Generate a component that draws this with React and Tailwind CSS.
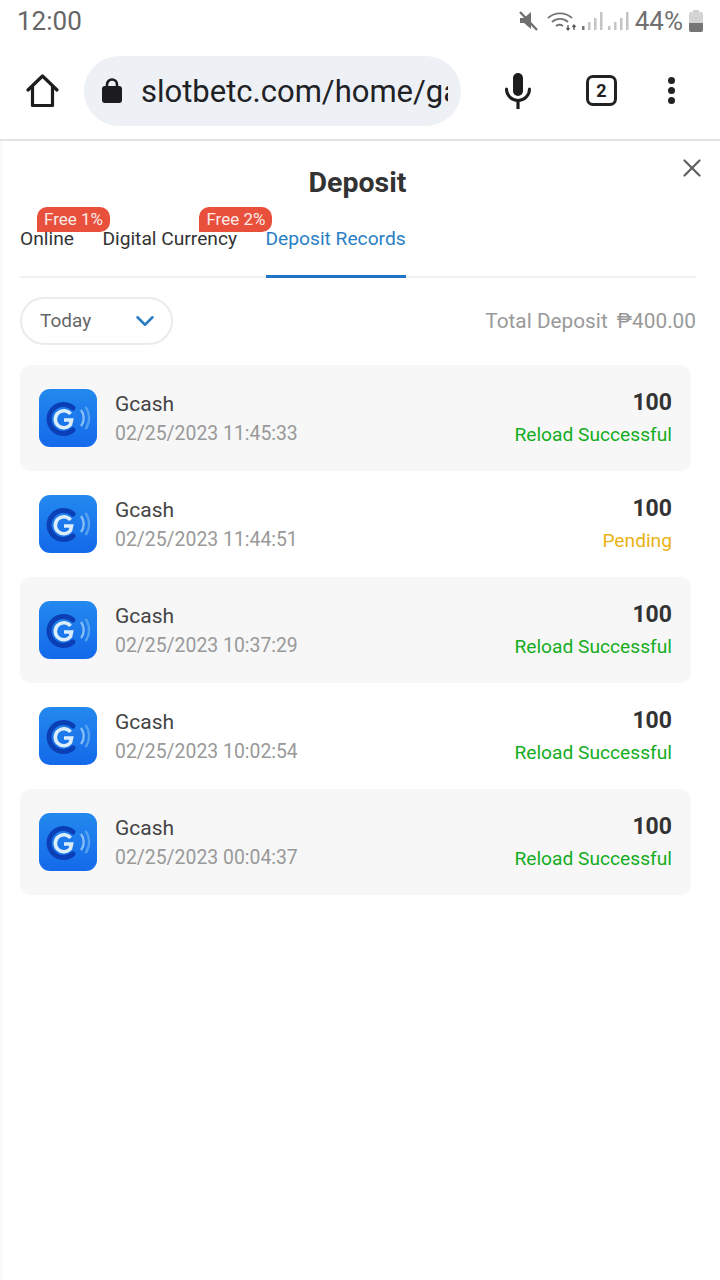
import React from 'react';
import { X, ChevronDown } from 'lucide-react';

const records = [
  { time: '02/25/2023 11:45:33', status: 'Reload Successful', shaded: true },
  { time: '02/25/2023 11:44:51', status: 'Pending', shaded: false },
  { time: '02/25/2023 10:37:29', status: 'Reload Successful', shaded: true },
  { time: '02/25/2023 10:02:54', status: 'Reload Successful', shaded: false },
  { time: '02/25/2023 00:04:37', status: 'Reload Successful', shaded: true },
];

const GcashIcon = () => (
  <svg width="58" height="58" viewBox="0 0 58 58" className="shrink-0">
    <defs>
      <linearGradient id="gcashBg" x1="0" y1="0" x2="0" y2="1">
        <stop offset="0" stopColor="#2389ee" />
        <stop offset="1" stopColor="#1469ea" />
      </linearGradient>
    </defs>
    <rect width="58" height="58" rx="11" fill="url(#gcashBg)" />
    <g transform="translate(-2 1.500)">
      <path d="M36 17.500 A14.500 14.500 0 1 0 36 39.500" fill="none" stroke="#0b3fb5" strokeWidth="5" strokeLinecap="round" />
      <path d="M33.500 23.500 A8.500 8.500 0 1 0 33.500 34 L34.500 29.500 H27" fill="none" stroke="#dcedfc" strokeWidth="3.600" />
    </g>
    <path d="M42 21 A13 13 0 0 1 42 37" fill="none" stroke="#86bdf4" strokeWidth="2.400" />
    <path d="M46.500 18 A19 19 0 0 1 46.500 40" fill="none" stroke="#55a0ef" strokeWidth="2.400" />
  </svg>
);

const StatusIcons = () => (
  <svg width="110" height="24" viewBox="0 0 110 24" className="shrink-0">
    {/* muted speaker */}
    <path d="M1 9h4l7-6v17l-7-6H1z" fill="#6f6f6f" />
    <path d="M1 3l17 18" stroke="#6f6f6f" strokeWidth="2.400" />
    {/* wifi */}
    <path d="M29 9a18 18 0 0 1 24 0M33 13a12 12 0 0 1 16 0M37 17a6 6 0 0 1 7 0" fill="none" stroke="#757575" strokeWidth="1.800" />
    <path d="M49 21v-5M47.500 19l1.500 2 1.500-2M55 16v5M53.500 18l1.500-2 1.500 2" fill="none" stroke="#555" strokeWidth="1.300" />
    {/* signal bars */}
    <rect x="63" y="17" width="2.500" height="4" fill="#777" />
    <rect x="69" y="13" width="2.500" height="8" fill="#c4c4c4" />
    <rect x="75" y="9" width="2.500" height="12" fill="#c4c4c4" />
    <rect x="81" y="3" width="2.500" height="18" fill="#c4c4c4" />
    <rect x="89" y="17" width="2.500" height="4" fill="#c4c4c4" />
    <rect x="95" y="13" width="2.500" height="8" fill="#c4c4c4" />
    <rect x="101" y="9" width="2.500" height="12" fill="#c4c4c4" />
    <rect x="107" y="3" width="2.500" height="18" fill="#c4c4c4" />
  </svg>
);

const Battery = () => (
  <div className="flex flex-col items-center w-[14px]">
    <div className="w-[6px] h-[2px] bg-[#cfcfcf]" />
    <div className="w-[14px] h-[20px] rounded-[2px] bg-[#d4d4d4] flex flex-col justify-end overflow-hidden">
      <div className="h-[9px] bg-[#757575]" />
    </div>
  </div>
);

const Tab = ({ label, active, badge, badgeClass }) => (
  <div className={`relative h-[61px] pt-[10px] text-[19.200px] leading-[24px] whitespace-nowrap border-b-[3px] ${active ? 'text-[#2a7fc4] border-[#2073c7]' : 'text-[#333] border-transparent'}`}>
    {label}
    {badge && (
      <span className={`absolute top-[-10px] h-[25px] px-[7px] text-[17px] leading-[24px] text-[#fbeae7] bg-[#e8503c] rounded-[10px] rounded-bl-none ${badgeClass}`}>
        {badge}
      </span>
    )}
  </div>
);

export default function App() {
  return (
    <div className="w-[720px] h-[1280px] bg-white overflow-hidden font-['Roboto',sans-serif]">
      {/* phone status bar */}
      <div className="h-[42px] flex items-center justify-between pl-[17px] pr-[17px]">
        <span className="text-[26px] leading-[40px] text-[#666]">12:00</span>
        <div className="flex items-center">
          <StatusIcons />
          <span className="text-[26px] leading-[40px] text-[#707070] ml-[6px] mr-[6px]">44%</span>
          <Battery />
        </div>
      </div>

      {/* browser toolbar */}
      <div className="h-[99px] flex items-center border-b-2 border-[#e2e2e2]">
        <svg width="33" height="34" viewBox="0 0 33 34" className="ml-[26px] shrink-0">
          <path d="M2 16 L16.500 2 L31 16 M6.500 13 V31.500 H26.500 V13" fill="none" stroke="#1d1d1d" strokeWidth="3.200" strokeLinejoin="round" strokeLinecap="round" />
        </svg>
        <div className="ml-[25px] w-[377px] h-[70px] shrink-0 rounded-full bg-[#edf0f5] flex items-center pl-[18px] pr-[13px]">
          <svg width="20" height="25" viewBox="0 0 20 25" className="shrink-0">
            <rect x="0" y="8" width="20" height="17" rx="3" fill="#1c1c20" />
            <path d="M5 10 V6.500 A5 5 0 0 1 15 6.500 V10" fill="none" stroke="#1c1c20" strokeWidth="2.600" />
          </svg>
          <span className="ml-[19px] pt-[2px] text-[31px] leading-[40px] text-[#202124] whitespace-nowrap overflow-hidden">slotbetc.com/home/game</span>
        </div>
        <svg width="26" height="36" viewBox="0 0 26 36" className="ml-[44px] shrink-0">
          <rect x="8" y="0" width="10" height="23" rx="5" fill="#1d1d1d" />
          <path d="M1.500 16 A11.500 11.500 0 0 0 24.500 16" fill="none" stroke="#1d1d1d" strokeWidth="3" strokeLinecap="round" />
          <path d="M13 27 V36" stroke="#1d1d1d" strokeWidth="3.200" />
        </svg>
        <div className="ml-[55px] w-[31px] h-[31px] shrink-0 rounded-[7px] border-[3px] border-[#222] flex items-center justify-center text-[18px] font-bold text-[#222]">2</div>
        <div className="ml-[51px] flex flex-col gap-[3px] shrink-0">
          <div className="w-[7px] h-[7px] rounded-full bg-[#222]" />
          <div className="w-[7px] h-[7px] rounded-full bg-[#222]" />
          <div className="w-[7px] h-[7px] rounded-full bg-[#222]" />
        </div>
      </div>

      {/* deposit panel */}
      <div className="relative h-[1139px] pl-[20px] pr-[24px] border-l-[3px] border-[#fafafa] -ml-[1px]">
        <X size={30} strokeWidth={1.700} className="absolute right-[13px] top-[12px] text-[#5f5f5f]" />
        <h1 className="pt-[24px] h-[76px] text-center text-[28.500px] leading-[36px] font-bold text-[#333] pr-[3px]">Deposit</h1>
        <div className="flex gap-[28.500px] border-b-2 border-[#f0f0f0] h-[61px] -ml-[2px]">
          <Tab label="Online" badge="Free 1%" badgeClass="left-[17px]" />
          <Tab label="Digital Currency" badge="Free 2%" badgeClass="left-[97px]" />
          <Tab label="Deposit Records" active />
        </div>

        <div className="flex items-center justify-between h-[48px] mt-[19px] -ml-[2px]">
          <div className="w-[153px] h-[48px] rounded-full border-2 border-[#ebebeb] flex items-center justify-between pl-[18px] pr-[11px] text-[19px] text-[#666]">
            Today
            <ChevronDown size={30} strokeWidth={2} className="text-[#2a7cc0]" />
          </div>
          <span className="pt-[2px] text-[20.800px] text-[#999]">Total Deposit <span className="ml-[4px]">₱400.00</span></span>
        </div>

        <div className="mt-[20px] -ml-[2px] w-[671px] flex flex-col">
          {records.map((r) => (
            <div key={r.time} className={`h-[106px] flex items-center pl-[19px] pr-[19px] rounded-[10px] ${r.shaded ? 'bg-[#f7f7f8]' : 'bg-white'}`}>
              <GcashIcon />
              <div className="ml-[18px] flex-1 pt-[3px]">
                <div className="text-[21px] leading-[28px] text-[#444]">Gcash</div>
                <div className="text-[19.400px] leading-[30px] mt-[1px] text-[#999]">{r.time}</div>
              </div>
              <div className="text-right pt-[3px]">
                <div className="text-[23px] leading-[28px] font-bold text-[#333]">100</div>
                <div className={`text-[19.200px] leading-[30px] mt-[3px] ${r.status === 'Pending' ? 'text-[#e9b213]' : 'text-[#14ad1e]'}`}>{r.status}</div>
              </div>
            </div>
          ))}
        </div>
      </div>
    </div>
  );
}
